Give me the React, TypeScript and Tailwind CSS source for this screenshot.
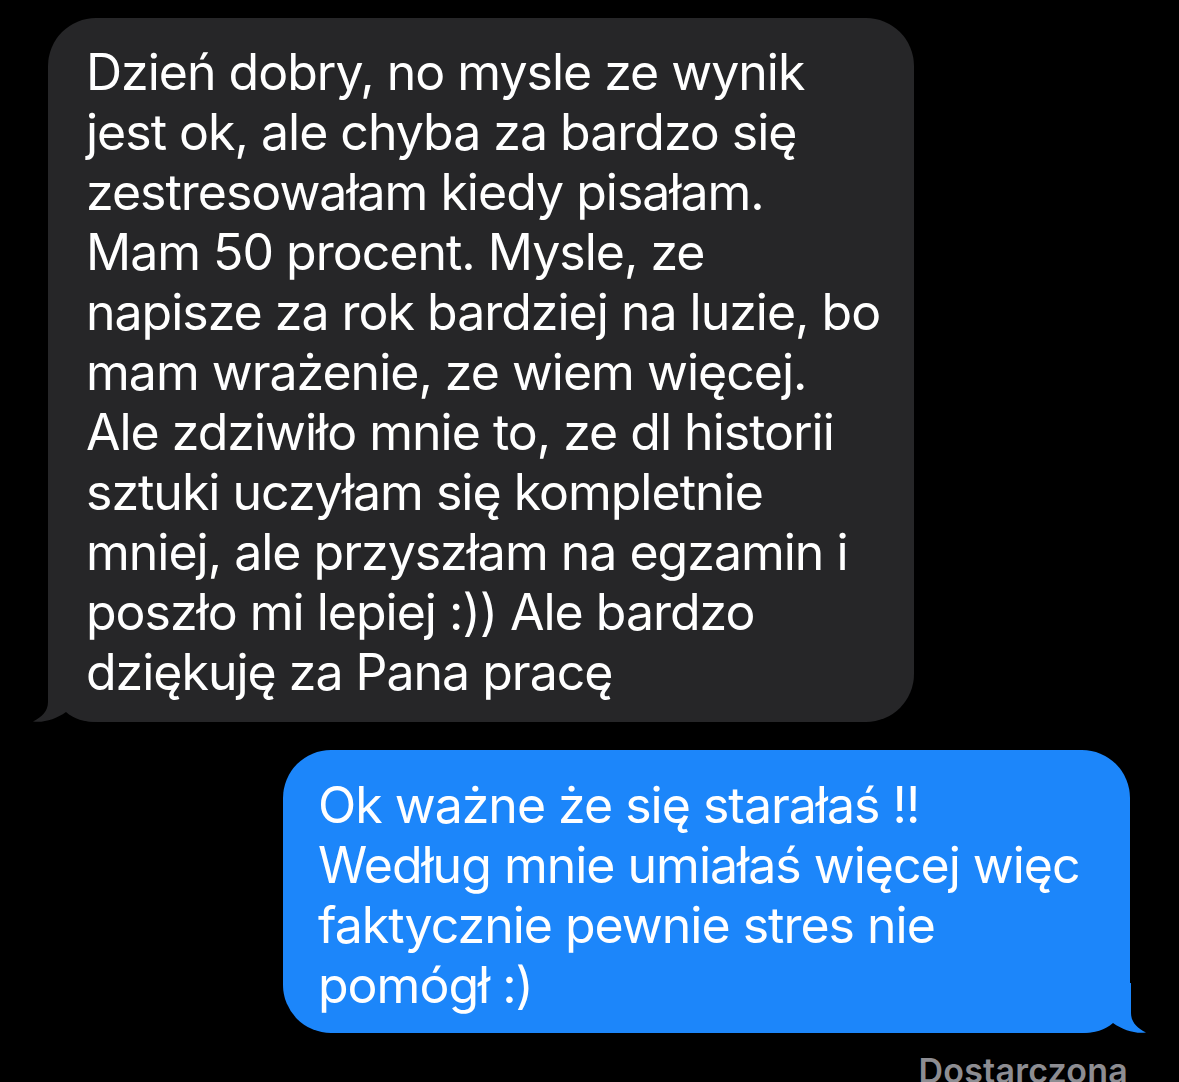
import React from "react";

const received = [
  "Dzień dobry, no mysle ze wynik",
  "jest ok, ale chyba za bardzo się",
  "zestresowałam kiedy pisałam.",
  "Mam 50 procent. Mysle, ze",
  "napisze za rok bardziej na luzie, bo",
  "mam wrażenie, ze wiem więcej.",
  "Ale zdziwiło mnie to, ze dl historii",
  "sztuki uczyłam się kompletnie",
  "mniej, ale przyszłam na egzamin i",
  "poszło mi lepiej :)) Ale bardzo",
  "dziękuję za Pana pracę",
];

const sent = [
  "Ok ważne że się starałaś !!",
  "Według mnie umiałaś więcej więc",
  "faktycznie pewnie stres nie",
  "pomógł :)",
];

function Tail({ color, flip }: { color: string; flip?: boolean }) {
  return (
    <svg
      width="80"
      height="50"
      viewBox="0 0 80 50"
      className={
        flip
          ? "absolute bottom-0 right-[-17px] -scale-x-100"
          : "absolute bottom-0 left-[-16px]"
      }
    >
      <path
        d="M16,0 L16,30 C16,39 10,45 1,49.5 C12,51 24,47 34,40 C42,47 52,50 66,50 L66,0 Z"
        fill={color}
      />
    </svg>
  );
}

export default function App() {
  return (
    <div
      className="w-[1179px] h-[1082px] overflow-hidden bg-black flex flex-col text-white"
      style={{ fontFamily: "Inter, 'Noto Sans', sans-serif" }}
    >
      <div className="relative mt-[18px] ml-[48px] w-[866px] rounded-[48px] bg-[#262628] pl-[38px] pt-[24px] pb-[20px]">
        <Tail color="#262628" />
        <div className="relative text-[50px] leading-[60px] tracking-[-1px]">
          {received.map((l) => (
            <div key={l} className="whitespace-nowrap">
              {l}
            </div>
          ))}
        </div>
      </div>

      <div className="relative mt-[28px] ml-[283px] w-[847px] rounded-[48px] bg-[#1c86fa] pl-[35px] pt-[25px] pb-[18px]">
        <Tail color="#1c86fa" flip />
        <div className="relative text-[50px] leading-[60px] tracking-[-1px]">
          {sent.map((l) => (
            <div key={l} className="whitespace-nowrap">
              {l}
            </div>
          ))}
        </div>
      </div>

      <div className="mt-[18px] mr-[51px] self-end text-[34px] font-semibold leading-[40px] tracking-[0.2px] text-[#8d8d92]">
        Dostarczona
      </div>
    </div>
  );
}
